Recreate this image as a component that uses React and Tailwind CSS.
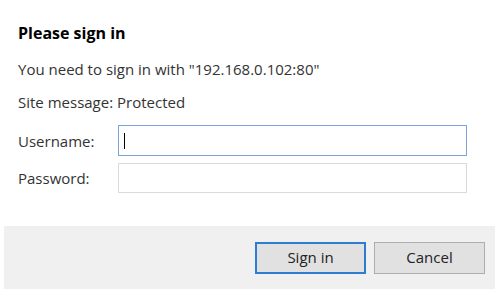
export default function App() {
  return (
    <div
      className="w-[501px] h-[299px] bg-white text-[#1a1a1a] overflow-hidden"
      style={{ fontFamily: '"Open Sans", "Noto Sans", sans-serif' }}
    >
      <div className="pl-[18px] pr-[34px] pt-[23px]">
        <h1 className="text-[16px] font-bold leading-[20px] text-black">
          Please sign in
        </h1>
        <p className="mt-[16px] text-[15px] leading-[20px] text-[#333]">
          You need to sign in with "192.168.0.102:80"
        </p>
        <p className="mt-[13px] text-[15px] leading-[20px] text-[#333]">
          Site message: Protected
        </p>
        <div className="mt-[13px] grid grid-cols-[100px_1fr] gap-y-[7px] items-center">
          <label className="text-[15px] leading-[20px] text-[#333]">Username:</label>
          <div className="h-[31px] border border-[#7ba4d6] bg-white flex items-center pl-[5px]">
            <span className="w-px h-[16px] bg-black" />
          </div>
          <label className="text-[15px] leading-[20px] text-[#333]">Password:</label>
          <div className="h-[30px] border border-[#dadada] bg-white" />
        </div>
      </div>
      <div className="mx-[4px] w-[491px] mt-[33px] h-[63px] bg-[#f0f0f0] flex items-center justify-end gap-[8px] pr-[10px]">
        <button className="w-[111px] h-[32px] border-2 border-[#2f7dd0] bg-[#e1e1e1] text-[15px] text-[#222]">
          Sign in
        </button>
        <button className="w-[111px] h-[32px] border border-[#adadad] bg-[#e1e1e1] text-[15px] text-[#222]">
          Cancel
        </button>
      </div>
    </div>
  );
}
